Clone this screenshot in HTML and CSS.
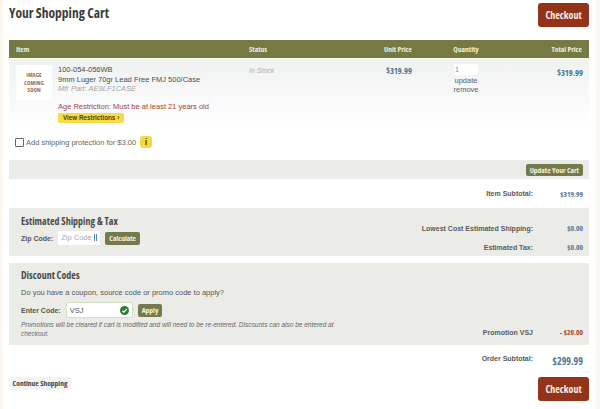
FILE: index.html
```html
<!DOCTYPE html>
<html lang="en">
<head>
    <meta charset="UTF-8">
    <title>Your Shopping Cart</title>
    <link rel="stylesheet" href="styles.css">
</head>
<body>
    <div class="page">
        <div class="cart-top">
            <h1 class="cart-title">Your Shopping Cart</h1>
            <a class="checkout-button">Checkout</a>
        </div>

        <div class="cart-head">
            <div class="col-item">Item</div>
            <div class="col-status">Status</div>
            <div class="col-unit">Unit Price</div>
            <div class="col-qty">Quantity</div>
            <div class="col-total">Total Price</div>
        </div>

        <div class="cart-row">
            <div class="col-item item-cell">
                <div class="item-main">
                    <div class="item-image">IMAGE<br>COMING<br>SOON</div>
                    <div class="item-text">
                        <div>100-054-056WB</div>
                        <div>9mm Luger 70gr Lead Free FMJ 500/Case</div>
                        <div class="item-part">Mfr Part: AE9LF1CASE</div>
                    </div>
                </div>
                <div class="age-note">
                    <div class="age-text">Age Restriction: Must be at least 21 years old</div>
                    <span class="restrict-link">View Restrictions ›</span>
                </div>
            </div>
            <div class="col-status status-cell">In Stock</div>
            <div class="col-unit price-cell">$319.99</div>
            <div class="col-qty qty-cell">
                <input class="qty-input" type="text" value="1">
                <div>update</div>
                <div>remove</div>
            </div>
            <div class="col-total price-cell total-cell">$319.99</div>
        </div>

        <label class="protection">
            <span class="checkbox"></span>
            <span>Add shipping protection for $3.00</span>
            <span class="info-badge">i</span>
        </label>

        <div class="update-bar">
            <a class="small-button">Update Your Cart</a>
        </div>

        <div class="sum-row item-subtotal">
            <span class="sum-label">Item Subtotal:</span>
            <span class="sum-value">$319.99</span>
        </div>

        <div class="panel shipping-panel">
            <div class="panel-left">
                <h2 class="panel-title">Estimated Shipping &amp; Tax</h2>
                <div class="form-line">
                    <span class="form-label">Zip Code:</span>
                    <span class="zip-input">Zip Code<i class="zip-cursor"></i></span>
                    <a class="small-button">Calculate</a>
                </div>
            </div>
            <div class="panel-right">
                <div class="sum-row">
                    <span class="sum-label">Lowest Cost Estimated Shipping:</span>
                    <span class="sum-value">$0.00</span>
                </div>
                <div class="sum-row">
                    <span class="sum-label">Estimated Tax:</span>
                    <span class="sum-value">$0.00</span>
                </div>
            </div>
        </div>

        <div class="panel discount-panel">
            <div class="panel-left">
                <h2 class="panel-title">Discount Codes</h2>
                <p class="discount-ask">Do you have a coupon, source code or promo code to apply?</p>
                <div class="form-line">
                    <span class="form-label">Enter Code:</span>
                    <span class="code-input">VSJ
                        <svg class="code-ok" width="9" height="9" viewBox="0 0 10 10">
                            <circle cx="5" cy="5" r="5" fill="#2f7d32"/>
                            <path d="M2.6 5.2 4.3 6.9 7.5 3.4" fill="none" stroke="#fff" stroke-width="1.4"/>
                        </svg>
                    </span>
                    <a class="small-button">Apply</a>
                </div>
                <p class="discount-note">Promotions will be cleared if cart is modified and will need to be re-entered. Discounts can also be entered at checkout.</p>
            </div>
            <div class="panel-right promo-side">
                <div class="sum-row">
                    <span class="sum-label">Promotion VSJ</span>
                    <span class="sum-value promo-value">- $20.00</span>
                </div>
            </div>
        </div>

        <div class="sum-row order-subtotal">
            <span class="sum-label">Order Subtotal:</span>
            <span class="sum-value">$299.99</span>
        </div>

        <div class="cart-bottom">
            <a class="continue-button">Continue Shopping</a>
            <a class="checkout-button">Checkout</a>
        </div>
    </div>
</body>
</html>
```

FILE: styles.css
```css
html, body {
    margin: 0;
    padding: 0;
}

body {
    height: 409px;
    overflow: hidden;
    background-color: #fdf7f1;
    font-family: 'Liberation Sans', Arial, sans-serif;
    font-size: 8px;
    color: #555;
}

.page {
    width: 580px;
    height: 409px;
    margin-left: 3px;
    padding: 0 6px;
    background-color: #ffffff;
}

.cart-top {
    display: flex;
    justify-content: space-between;
    align-items: flex-start;
    height: 40px;
    padding-top: 3px;
    box-sizing: border-box;
}

.cart-title {
    margin: 1px 0 0;
    font-family: 'Open Sans', sans-serif;
    font-stretch: 75%;
    font-size: 13.5px;
    line-height: 18px;
    font-weight: bold;
    color: #3c3c3a;
}

.checkout-button {
    display: block;
    width: 51px;
    height: 24px;
    line-height: 24px;
    text-align: center;
    background-color: #933319;
    border-radius: 3px;
    color: #fbeee5;
    font-family: 'Open Sans', sans-serif;
    font-stretch: 75%;
    font-size: 10px;
    font-weight: bold;
}

.cart-head {
    display: flex;
    height: 18px;
    line-height: 18px;
    background-color: #757a45;
    color: #f2f0dc;
    font-family: 'Open Sans', sans-serif;
    font-stretch: 75%;
    font-size: 7.5px;
    font-weight: bold;
    border-bottom: 1px solid #fdfbe9;
}

.col-item {
    width: 233px;
    padding-left: 7px;
    flex-shrink: 0;
}

.col-status {
    width: 100px;
    flex-shrink: 0;
}

.col-unit {
    width: 63px;
    text-align: right;
    flex-shrink: 0;
}

.col-qty {
    width: 108px;
    text-align: center;
    flex-shrink: 0;
}

.col-total {
    flex-grow: 1;
    text-align: right;
    padding-right: 7px;
}

.cart-row {
    display: flex;
    height: 68px;
    padding-top: 6px;
    box-sizing: border-box;
    background: linear-gradient(#f0f1f1, #ffffff);
}

.item-main {
    display: flex;
    gap: 6px;
}

.item-image {
    width: 36px;
    height: 35px;
    background-color: #ffffff;
    color: #a06a3c;
    font-family: 'Open Sans', sans-serif;
    font-stretch: 75%;
    font-size: 6px;
    line-height: 7.5px;
    font-weight: bold;
    text-align: center;
    padding-top: 7px;
    box-sizing: border-box;
}

.item-text {
    font-size: 7.5px;
    line-height: 9.5px;
    color: #4c4c4c;
}

.item-part {
    color: #a5a5a5;
    font-style: italic;
}

.age-note {
    margin: 2px 0 0 42px;
}

.age-text {
    font-size: 7.5px;
    line-height: 10px;
    color: #a6433a;
}

.restrict-link {
    display: inline-block;
    margin-top: 1px;
    padding: 0 5px;
    height: 10px;
    line-height: 10px;
    background-color: #f6dc45;
    border-radius: 2px;
    font-size: 6.3px;
    font-weight: bold;
    color: #4a3d10;
}

.status-cell {
    color: #acacac;
    font-style: italic;
    font-size: 7px;
    line-height: 9px;
    padding-top: 1px;
}

.price-cell {
    color: #4a7698;
    font-family: 'Open Sans', sans-serif;
    font-stretch: 75%;
    font-size: 8.5px;
    font-weight: bold;
    line-height: 10px;
    padding-top: 1px;
}

.qty-cell {
    display: flex;
    flex-direction: column;
    align-items: center;
    font-family: 'Liberation Sans', Arial, sans-serif;
    font-size: 7.5px;
    font-weight: normal;
    line-height: 9px;
    color: #5a6068;
    padding-top: 0;
}

.qty-input {
    width: 24px;
    height: 11px;
    margin: -1px 0 1px;
    padding: 0 1px;
    border: 0;
    background-color: #ffffff;
    font-family: inherit;
    font-size: 7px;
    color: #888;
    box-sizing: border-box;
}

.total-cell {
    padding-top: 3px;
    padding-right: 6px;
}

.protection {
    display: flex;
    align-items: center;
    gap: 2px;
    height: 33px;
    padding: 0 0 3px 6px;
    box-sizing: border-box;
    font-size: 7.5px;
    color: #666;
}

.checkbox {
    width: 9px;
    height: 9px;
    box-sizing: border-box;
    border: 1px solid #666;
    border-radius: 1px;
    background-color: #fff;
}

.info-badge {
    width: 12px;
    height: 12px;
    margin-left: 2px;
    background-color: #f5d93f;
    border-radius: 3px;
    text-align: center;
    line-height: 12px;
    font-weight: bold;
    color: #5b4a0c;
    font-size: 9px;
}

.update-bar {
    display: flex;
    justify-content: flex-end;
    align-items: center;
    height: 19px;
    padding-right: 6px;
    background-color: #ebece8;
}

.small-button {
    display: inline-block;
    padding: 0 4px;
    height: 12px;
    line-height: 12px;
    border-radius: 2px;
    background-color: #757a4c;
    color: #f5f3e2;
    font-family: 'Open Sans', sans-serif;
    font-stretch: 75%;
    font-size: 7.5px;
    font-weight: bold;
    white-space: nowrap;
}

.sum-row {
    display: flex;
    justify-content: flex-end;
    align-items: center;
}

.sum-label {
    font-size: 7px;
    font-weight: bold;
    color: #5a5a5a;
    white-space: nowrap;
}

.sum-value {
    width: 56px;
    padding-right: 6px;
    box-sizing: border-box;
    text-align: right;
    font-family: 'Open Sans', sans-serif;
    font-stretch: 75%;
    font-size: 7.5px;
    font-weight: bold;
    color: #4a7698;
}

.item-subtotal {
    height: 29px;
}

.panel {
    display: flex;
    justify-content: space-between;
    background-color: #ebece8;
}

.panel-left {
    padding-left: 12px;
}

.panel-title {
    margin: 0;
    font-family: 'Open Sans', sans-serif;
    font-stretch: 75%;
    font-size: 10px;
    line-height: 13px;
    font-weight: bold;
    color: #4a4a46;
}

.form-line {
    display: flex;
    align-items: center;
    gap: 5px;
}

.form-label {
    font-size: 7px;
    font-weight: bold;
    color: #55564f;
    white-space: nowrap;
}

.shipping-panel {
    height: 48px;
}

.shipping-panel .panel-left {
    padding-top: 7px;
}

.shipping-panel .form-line {
    margin-top: 3px;
}

.zip-input {
    position: relative;
    display: inline-block;
    width: 42px;
    height: 14px;
    line-height: 14px;
    padding-left: 3px;
    box-sizing: border-box;
    background-color: #ffffff;
    font-size: 7.5px;
    color: #aaa;
}

.zip-cursor {
    position: absolute;
    right: 3px;
    top: 3px;
    width: 3px;
    height: 7px;
    border: 1px solid #4a87a8;
    border-width: 0 1px;
    box-sizing: border-box;
}

.shipping-panel .small-button {
    height: 13px;
    line-height: 13px;
}

.panel-right {
    display: flex;
    flex-direction: column;
    padding-top: 15px;
    gap: 9px;
}

.discount-panel {
    height: 82px;
    margin-top: 7px;
}

.discount-panel .panel-left {
    width: 330px;
    padding-top: 6px;
}

.discount-ask {
    margin: 5px 0 0;
    font-size: 7.5px;
    line-height: 11px;
    color: #555;
}

.discount-panel .form-line {
    margin-top: 4px;
}

.code-input {
    display: flex;
    justify-content: space-between;
    align-items: center;
    width: 67px;
    height: 16px;
    padding: 0 3px;
    box-sizing: border-box;
    background-color: #ffffff;
    border: 1px solid #cfe0c4;
    border-radius: 2px;
    font-size: 7.5px;
    color: #555;
}

.discount-panel .small-button {
    height: 13px;
    line-height: 13px;
}

.discount-note {
    margin: 3px 0 0;
    font-size: 6.5px;
    line-height: 8.5px;
    font-style: italic;
    color: #666;
}

.promo-side {
    padding-top: 0;
    justify-content: flex-end;
    padding-bottom: 8px;
}

.promo-value {
    color: #a6432c;
}

.order-subtotal {
    height: 32px;
}

.order-subtotal .sum-label {
    margin-bottom: 5px;
}

.order-subtotal .sum-value {
    font-size: 10px;
}

.cart-bottom {
    display: flex;
    justify-content: space-between;
    align-items: flex-start;
}

.continue-button {
    display: block;
    width: 62px;
    height: 13px;
    line-height: 13px;
    text-align: center;
    background-color: #f3f3f1;
    border-radius: 2px;
    font-family: 'Open Sans', sans-serif;
    font-stretch: 75%;
    font-size: 7.5px;
    font-weight: bold;
    color: #444;
    white-space: nowrap;
}
```
